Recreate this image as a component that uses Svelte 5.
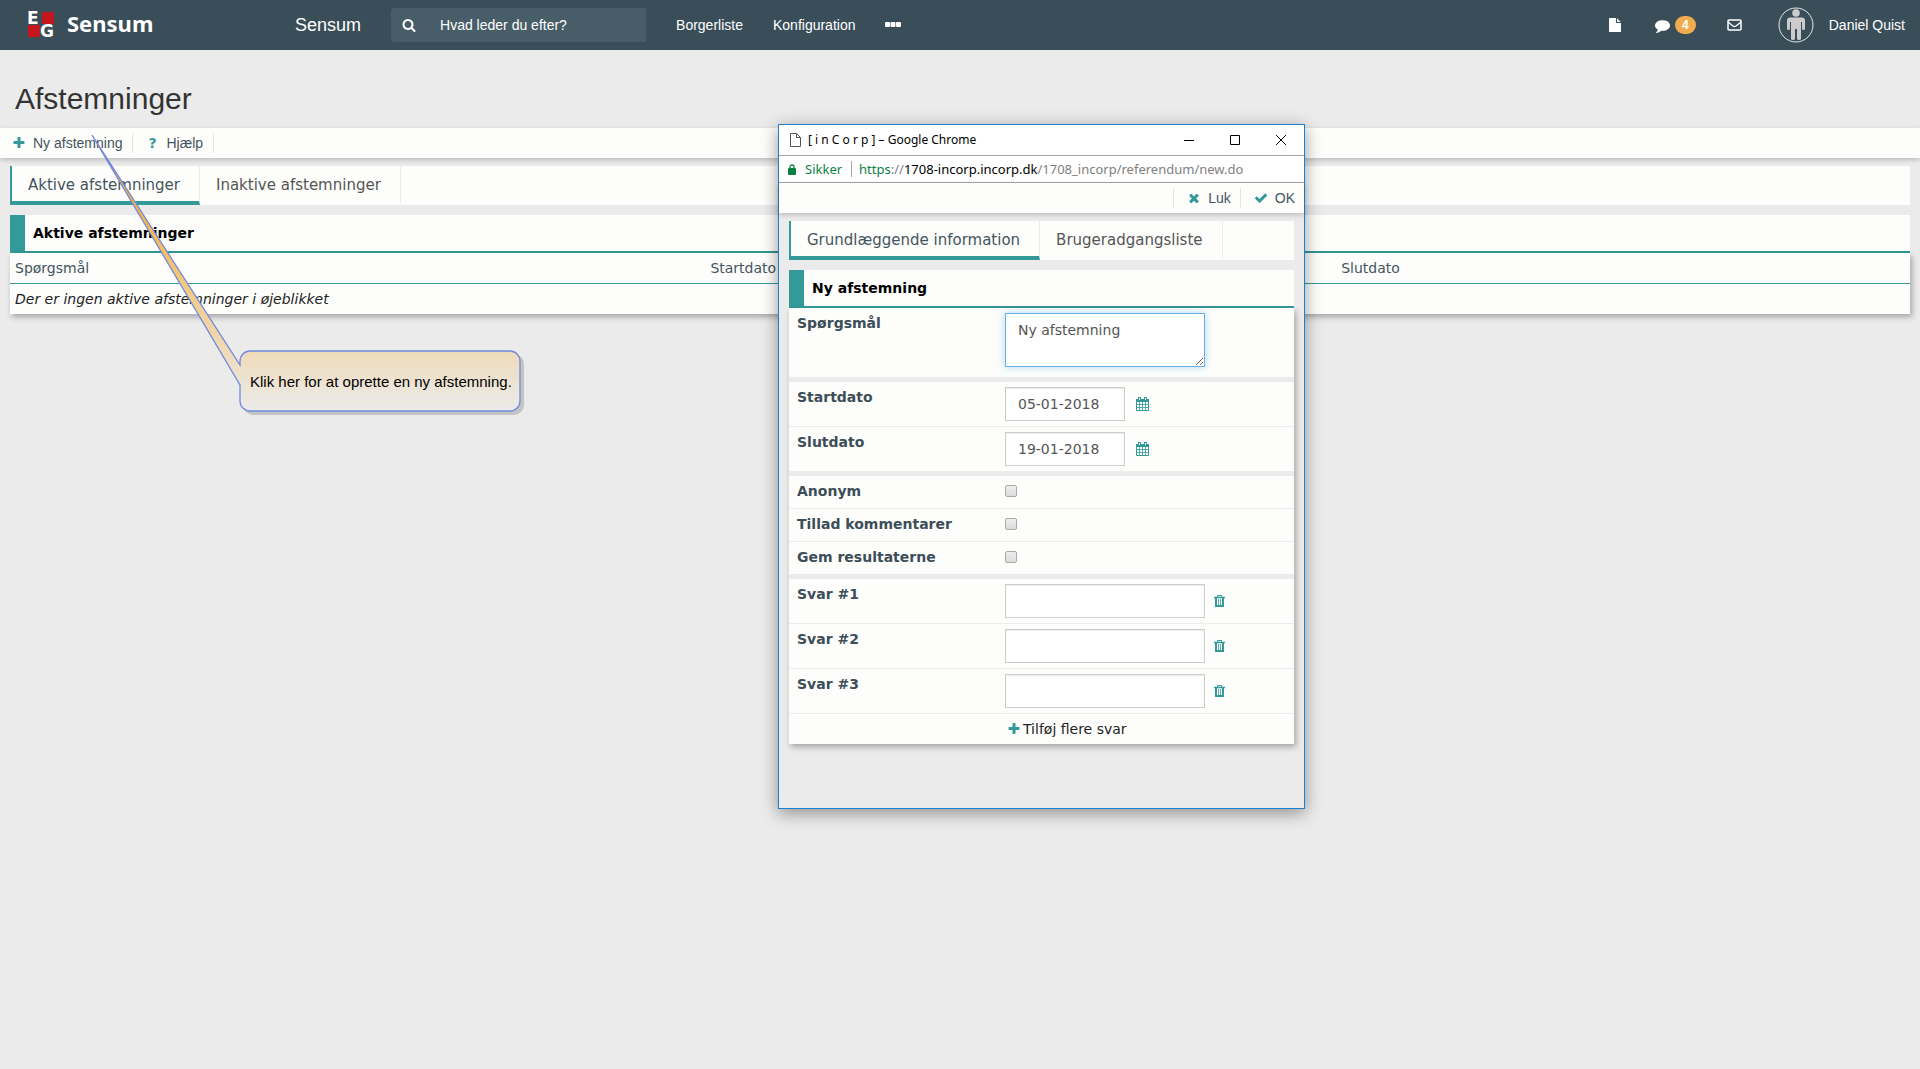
<script>
  let question = $state('Ny afstemning');
  let startDate = $state('05-01-2018');
  let endDate = $state('19-01-2018');
  let answers = $state(['', '', '']);

  const options = [
    { id: 'anonymous', label: 'Anonym' },
    { id: 'comments', label: 'Tillad kommentarer' },
    { id: 'save-results', label: 'Gem resultaterne' }
  ];

  const icons = {
    search: 'M1216 832q0-185-131.5-316.5t-316.5-131.5-316.5 131.5-131.5 316.5 131.5 316.5 316.5 131.5 316.5-131.5 131.5-316.5zm512 832q0 52-38 90t-90 38q-54 0-90-38l-343-342q-179 124-399 124-143 0-273.5-55.5t-225-150-150-225-55.5-273.5 55.5-273.5 150-225 225-150 273.5-55.5 273.5 55.5 225 150 150 225 55.5 273.5q0 220-124 399l343 343q37 37 37 90z',
    plus: 'M1600 736v192q0 40-28 68t-68 28h-416v416q0 40-28 68t-68 28h-192q-40 0-68-28t-28-68v-416h-416q-40 0-68-28t-28-68v-192q0-40 28-68t68-28h416v-416q0-40 28-68t68-28h192q40 0 68 28t28 68v416h416q40 0 68 28t28 68z',
    file: 'M1152 512v-472q22 14 36 28l408 408q14 14 28 36h-472zm-128 32q0 40 28 68t68 28h544v1056q0 40-28 68t-68 28h-1344q-40 0-68-28t-28-68v-1600q0-40 28-68t68-28h800v544z',
    comment: 'M1792 896q0 174-120 321.5t-326 233-450 85.5q-70 0-145-8-198 175-460 242-49 14-114 22-17 2-30.5-9t-17.5-29v-1q-3-4-.5-12t2-10 4.5-9.5l6-9 7-8.5 8-9q7-8 31-34.5t34.5-38 31-39.5 32.5-51 27-59 26-76q-157-89-247.5-220t-90.5-281q0-130 71-248.5t191-204.5 286-136.5 348-50.5q244 0 450 85.5t326 233 120 321.5z',
    times: 'M1490 1322q0 40-28 68l-136 136q-28 28-68 28t-68-28l-294-294-294 294q-28 28-68 28t-68-28l-136-136q-28-28-28-68t28-68l294-294-294-294q-28-28-28-68t28-68l136-136q28-28 68-28t68 28l294 294 294-294q28-28 68-28t68 28l136 136q28 28 28 68t-28 68l-294 294 294 294q28 28 28 68z',
    check: 'M1671 566q0 40-28 68l-724 724-136 136q-28 28-68 28t-68-28l-136-136-362-362q-28-28-28-68t28-68l136-136q28-28 68-28t68 28l294 295 656-657q28-28 68-28t68 28l136 136q28 28 28 68z'
  };

  function addAnswer() {
    answers.push('');
  }

  function removeAnswer(index) {
    answers.splice(index, 1);
  }
</script>

{#snippet icon(name, size = 14)}
  <svg class="icon" width={size} height={size} viewBox="0 0 1792 1792" aria-hidden="true">
    <path fill="currentColor" d={icons[name]} />
  </svg>
{/snippet}

{#snippet calendar()}
  <svg class="icon" width="13" height="14" viewBox="0 0 13 14" fill="none" aria-hidden="true">
    <path fill="currentColor" d="M0 2h2V0h3v2h3V0h3v2h2v3H0z" />
    <path stroke="currentColor" d="M.5 4v9.500h12V4" />
    <path stroke="currentColor" stroke-width=".8" d="M0 7.500h13M0 10.500h13M3.500 5v9M6.500 5v9M9.500 5v9" />
    <path stroke="#fdfefc" d="M3.500 1v2M9.500 1v2" />
  </svg>
{/snippet}

{#snippet trash()}
  <svg class="icon" width="11" height="12" viewBox="0 0 11 12" fill="none" aria-hidden="true">
    <path stroke="currentColor" d="M3.500 2V.5h4V2" />
    <path stroke="currentColor" stroke-width="1.500" d="M0 2.500h11" />
    <path stroke="currentColor" stroke-width="2" d="M2 3v8h7V3" />
    <path stroke="currentColor" stroke-width=".8" d="M4.500 4v6M6.500 4v6" />
  </svg>
{/snippet}

<div class="page">
  <nav class="navbar">
    <a class="brand" href="#home" aria-label="EG Sensum">
      <svg width="28" height="28" viewBox="0 0 28 28" aria-hidden="true">
        <rect x="14" y="1" width="12" height="12" rx="1" fill="#c5161d" />
        <rect x="0" y="14" width="12" height="12" rx="1" fill="#c5161d" />
        <text x="-1" y="13">E</text>
        <text x="12" y="26">G</text>
      </svg>
      <span>Sensum</span>
    </a>
    <a class="product" href="#sensum">Sensum</a>
    <label class="search">
      {@render icon('search')}
      <input type="text" placeholder="Hvad leder du efter?" aria-label="Søg" />
    </label>
    <a class="nav-link" href="#borgerliste">Borgerliste</a>
    <a class="nav-link" href="#konfiguration">Konfiguration</a>
    <button class="more" aria-label="Mere">
      <svg width="16" height="7" viewBox="0 0 16 7" aria-hidden="true">
        <rect x="0" y="0" width="5" height="5" rx="1" fill="currentColor" />
        <rect x="5.500" y="0" width="5" height="5" rx="1" fill="currentColor" />
        <rect x="11" y="0" width="5" height="5" rx="1" fill="currentColor" />
      </svg>
    </button>

    <div class="nav-right">
      <a class="documents" href="#dokumenter" aria-label="Dokumenter">{@render icon('file')}</a>
      <a class="messages" href="#beskeder" aria-label="Beskeder">
        {@render icon('comment', 15)}
        <span class="badge">4</span>
      </a>
      <a class="mail" href="#post" aria-label="Post">
        <svg class="icon" width="15" height="12" viewBox="0 0 15 12" aria-hidden="true">
          <rect x="1" y="1" width="13" height="10" rx="1" fill="none" stroke="currentColor" stroke-width="1.500" />
          <path d="M1 3l5 4q1.500 1 3 0l5-4" fill="none" stroke="currentColor" stroke-width="1.300" />
        </svg>
      </a>
      <a class="user" href="#profil">
        <svg width="36" height="36" viewBox="0 0 36 36" aria-hidden="true">
          <circle cx="18" cy="18" r="17" fill="none" stroke="#e6eaeb" />
          <circle cx="18" cy="6" r="3.800" fill="#ccc" />
          <path fill="#ccc" d="M12 10.500h12q3 0 3 3v8q0 1.500-1.500 1.500T24 21.500V15h-1v16.500q0 1.500-2 1.500t-2-1.500V22h-2v9.500q0 1.500-2 1.500t-2-1.500V15h-1v6.500q0 1.500-1.500 1.500T9 21.500v-8q0-3 3-3z" />
        </svg>
        <span>Daniel Quist</span>
      </a>
    </div>
  </nav>

  <h1>Afstemninger</h1>

  <div class="toolbar">
    <button class="tool">{@render icon('plus')}<span>Ny afstemning</span></button>
    <button class="tool"><b class="help">?</b><span>Hjælp</span></button>
  </div>

  <main>
    <div class="tabs">
      <button class="tab active">Aktive afstemninger</button>
      <button class="tab">Inaktive afstemninger</button>
    </div>
    <h2>Aktive afstemninger</h2>
    <table>
      <thead>
        <tr>
          <th class="col-question">Spørgsmål</th>
          <th class="col-start">Startdato</th>
          <th>Slutdato</th>
        </tr>
      </thead>
      <tbody>
        <tr>
          <td colspan="3">Der er ingen aktive afstemninger i øjeblikket</td>
        </tr>
      </tbody>
    </table>
  </main>

  <!-- Help balloon pointing at the "Ny afstemning" button -->
  <div class="callout">
    <svg width="440" height="286" viewBox="0 0 440 286" aria-hidden="true">
      <defs>
        <linearGradient id="balloon" gradientUnits="userSpaceOnUse" x1="0" y1="0" x2="0" y2="276">
          <stop offset="0" stop-color="#ffa000" />
          <stop offset="1" stop-color="#ebebeb" />
        </linearGradient>
      </defs>
      <rect x="151" y="219" width="281" height="61" rx="10" fill="#c4c4c4" />
      <path
        d="M0 0L148 230V226a10 10 0 0 1 10-10H418a10 10 0 0 1 10 10V266a10 10 0 0 1-10 10H158a10 10 0 0 1-10-10V250Z"
        fill="url(#balloon)" stroke="#6f8ade" stroke-width="1.300" />
    </svg>
    <p>Klik her for at oprette en ny afstemning.</p>
  </div>

  <div class="window">
    <div class="titlebar">
      <svg width="11" height="14" viewBox="0 0 11 14" fill="none" stroke="#555" aria-hidden="true">
        <path d="M.5.5h6l4 4v9H.5zM6.500.5v4h4" />
      </svg>
      <span class="title">[ i n C o r p ] – Google Chrome</span>
      <button aria-label="Minimer">
        <svg width="10" height="10" viewBox="0 0 10 10" stroke="#000"><path d="M0 5.500h10" /></svg>
      </button>
      <button aria-label="Maksimer">
        <svg width="10" height="10" viewBox="0 0 10 10" stroke="#000" fill="none"><path d="M.5.5h9v9h-9z" /></svg>
      </button>
      <button aria-label="Luk vindue">
        <svg width="10" height="10" viewBox="0 0 10 10" stroke="#000"><path d="M0 0l10 10M10 0L0 10" /></svg>
      </button>
    </div>
    <div class="address">
      <svg width="8" height="11" viewBox="0 0 8 11" aria-hidden="true">
        <rect y="4" width="8" height="7" rx="1" fill="#0b8043" />
        <path d="M2 5V3a2 2 0 0 1 4 0v2" fill="none" stroke="#0b8043" stroke-width="1.300" />
      </svg>
      <span class="secure">Sikker</span>
      <span class="url"><span class="scheme">https</span>://<span class="host">1708-incorp.incorp.dk</span>/1708_incorp/referendum/new.do</span>
    </div>
    <div class="toolbar actions">
      <button class="tool">{@render icon('times')}<span>Luk</span></button>
      <button class="tool">{@render icon('check')}<span>OK</span></button>
    </div>

    <div class="window-body">
      <div class="tabs">
        <button class="tab active">Grundlæggende information</button>
        <button class="tab">Brugeradgangsliste</button>
      </div>
      <h2>Ny afstemning</h2>
      <form>
        <fieldset>
          <div class="row question">
            <label for="question">Spørgsmål</label>
            <textarea id="question" bind:value={question}></textarea>
          </div>
        </fieldset>
        <fieldset>
          <div class="row">
            <label for="start">Startdato</label>
            <input id="start" class="field date" type="text" bind:value={startDate} />
            <button type="button" class="pick" aria-label="Vælg startdato">{@render calendar()}</button>
          </div>
          <div class="row">
            <label for="end">Slutdato</label>
            <input id="end" class="field date" type="text" bind:value={endDate} />
            <button type="button" class="pick" aria-label="Vælg slutdato">{@render calendar()}</button>
          </div>
        </fieldset>
        <fieldset>
          {#each options as option}
            <div class="row option">
              <label for={option.id}>{option.label}</label>
              <input id={option.id} type="checkbox" />
            </div>
          {/each}
        </fieldset>
        <fieldset>
          {#each answers as _, i}
            <div class="row">
              <label for="answer-{i}">Svar #{i + 1}</label>
              <input id="answer-{i}" class="field" type="text" bind:value={answers[i]} />
              <button type="button" class="remove" aria-label="Slet svar {i + 1}" onclick={() => removeAnswer(i)}>
                {@render trash()}
              </button>
            </div>
          {/each}
          <div class="row add">
            <button type="button" onclick={addAnswer}>{@render icon('plus')}<span>Tilføj flere svar</span></button>
          </div>
        </fieldset>
      </form>
    </div>
  </div>
</div>

<style>
  :global(body) {
    background: #ebebeb;
  }

  .page {
    position: relative;
    min-height: 100vh;
    font: 14px/20px "DejaVu Sans", sans-serif;
    color: #222;
  }

  button {
    padding: 0;
    border: 0;
    background: none;
    font: inherit;
    color: inherit;
    cursor: pointer;
  }

  a {
    color: inherit;
    text-decoration: none;
  }

  .icon {
    display: block;
    flex: none;
  }

  /* Top navigation */
  .navbar {
    display: flex;
    align-items: center;
    height: 50px;
    padding: 0 15px 0 28px;
    background: #394e58;
    color: #fff;
    font-family: "Liberation Sans", Arial, sans-serif;
  }

  .brand {
    display: flex;
    align-items: center;
    gap: 11px;
    width: 267px;
    font: bold 22px/26px "Noto Sans", sans-serif;
  }

  .brand svg {
    overflow: visible;
  }

  .brand span {
    padding-bottom: 4px;
  }

  .brand text {
    font: bold 17px "DejaVu Sans", sans-serif;
    fill: #fff;
  }

  .product {
    margin-right: 30px;
    font-size: 18px;
  }

  .search {
    display: flex;
    align-items: center;
    gap: 22px;
    box-sizing: border-box;
    width: 255px;
    height: 34px;
    margin-right: 30px;
    padding-left: 11px;
    border-radius: 4px 0 0 4px;
    background: #475d67;
  }

  .search input {
    flex: 1;
    min-width: 0;
    border: 0;
    outline: 0;
    background: none;
    font: inherit;
    color: #fff;
  }

  .search input::placeholder {
    color: #fff;
    opacity: 1;
  }

  .nav-link {
    margin-right: 30px;
  }

  .more svg {
    display: block;
  }

  .nav-right {
    display: flex;
    align-items: center;
    margin-left: auto;
  }

  .documents {
    margin-right: 33px;
  }

  .messages {
    display: flex;
    align-items: center;
    gap: 5px;
    margin-right: 31px;
  }

  .badge {
    width: 21px;
    border-radius: 10px;
    background: #f0ad4e;
    font-size: 12px;
    font-weight: bold;
    line-height: 18px;
    text-align: center;
  }

  .mail {
    margin-right: 36px;
  }

  .user {
    display: flex;
    align-items: center;
    gap: 15px;
  }

  h1 {
    margin: 0;
    padding: 31px 15px 11px;
    font: 30px/36px "Liberation Sans", Arial, sans-serif;
    color: #333;
  }

  /* Toolbars */
  .toolbar {
    display: flex;
    align-items: center;
    height: 30px;
    background: #fdfefc;
    box-shadow: 0 2px 5px rgba(0, 0, 0, 0.2);
    font-family: "Liberation Sans", Arial, sans-serif;
    color: #44545d;
  }

  .tool {
    display: flex;
    align-items: center;
    gap: 7px;
    height: 20px;
    padding: 0 10px 0 12px;
    border-right: 1px solid #e6e6e6;
  }

  .tool .icon,
  .help {
    color: #339999;
  }

  .help {
    width: 14px;
    font: bold 14px/20px "DejaVu Sans", sans-serif;
    text-align: center;
  }

  .actions {
    justify-content: flex-end;
  }

  .actions .tool {
    padding: 0 9px 0 13px;
    border-right: 0;
    border-left: 1px solid #e6e6e6;
  }

  /* Tabs and section heading */
  main {
    padding: 8px 10px;
  }

  .tabs {
    display: flex;
    height: 39px;
    margin-bottom: 10px;
    background: #fdfefc;
  }

  .tab {
    padding: 2px 19px 0 16px;
    border-right: 1px solid #ebebeb;
    border-bottom: 4px solid transparent;
    font-size: 15px;
    color: #555;
  }

  .tab.active {
    border-left: 2px solid #339999;
    border-bottom-color: #339999;
    color: #44545d;
  }

  h2 {
    margin: 0;
    padding-left: 8px;
    border-left: 15px solid #339999;
    border-bottom: 2px solid #339999;
    background: #fdfefc;
    font-size: 14px;
    line-height: 36px;
    color: #000;
  }

  table {
    width: 100%;
    border-collapse: collapse;
    background: #fdfefc;
    box-shadow: 2px 3px 6px rgba(0, 0, 0, 0.3);
  }

  th,
  td {
    height: 30px;
    padding: 0 5px;
    text-align: left;
    font-weight: normal;
  }

  th {
    border-bottom: 1px solid #339999;
    color: #44545d;
  }

  td {
    font-style: italic;
  }

  .col-question {
    width: 36.6%;
  }

  .col-start {
    width: 33.2%;
  }

  /* Help balloon */
  .callout {
    position: absolute;
    top: 135px;
    left: 92px;
  }

  .callout svg {
    display: block;
    overflow: visible;
  }

  .callout p {
    position: absolute;
    top: 237px;
    left: 158px;
    margin: 0;
    font-family: "Liberation Sans", Arial, sans-serif;
    font-size: 15px;
    color: #000;
    white-space: nowrap;
  }

  /* Popup browser window */
  .window {
    position: absolute;
    top: 124px;
    left: 778px;
    width: 525px;
    border: 1px solid #1c80d0;
    background: #ebebeb;
    box-shadow: 0 4px 16px rgba(0, 0, 0, 0.4);
  }

  .titlebar,
  .address {
    display: flex;
    align-items: center;
    background: #fff;
    border-bottom: 1px solid #a5a5a5;
    font-family: "Noto Sans", sans-serif;
  }

  .titlebar {
    height: 30px;
    padding-left: 11px;
    font-size: 12px;
    color: #000;
  }

  .title {
    flex: 1;
    margin-left: 7px;
  }

  .titlebar button {
    display: grid;
    place-items: center;
    width: 46px;
    height: 30px;
  }

  .address {
    height: 26px;
    padding-left: 9px;
    font-size: 13px;
  }

  .secure {
    margin: 0 7px 0 9px;
    padding-right: 9px;
    border-right: 1px solid #a5a5a5;
    line-height: 16px;
  }

  .secure,
  .scheme {
    color: #0b8043;
  }

  .url {
    color: #808080;
    white-space: nowrap;
  }

  .host {
    color: #000;
  }

  .window-body {
    padding: 8px 10px 64px;
  }

  form {
    box-shadow: 2px 3px 6px rgba(0, 0, 0, 0.3);
  }

  fieldset {
    min-width: 0;
    margin: 0;
    padding: 0;
    border: 0;
    border-bottom: 5px solid #ebebeb;
    background: #fdfefc;
  }

  fieldset:last-child {
    border-bottom: 0;
  }

  .row {
    display: flex;
    align-items: center;
    padding: 5px 8px;
    border-bottom: 1px solid #ebebeb;
  }

  .row:last-child {
    border-bottom: 0;
  }

  .row label {
    align-self: flex-start;
    width: 208px;
    font-weight: bold;
    color: #3c4d58;
  }

  .question {
    padding-bottom: 10px;
  }

  textarea,
  .field {
    box-sizing: border-box;
    width: 200px;
    height: 34px;
    margin: 0;
    padding: 6px 12px;
    border: 1px solid #ccc;
    background: #fff;
    box-shadow: inset 0 1px 1px rgba(0, 0, 0, 0.08);
    font: inherit;
    color: #555;
  }

  textarea {
    height: 54px;
    border-color: #66afe9;
    box-shadow: 0 0 8px rgba(102, 175, 233, 0.5);
    resize: vertical;
  }

  .date {
    width: 120px;
  }

  .option {
    padding-bottom: 7px;
  }

  .option input {
    appearance: none;
    box-sizing: border-box;
    width: 12px;
    height: 12px;
    margin: 0;
    border: 1px solid #a9a9a9;
    border-radius: 2px;
    background: linear-gradient(#eee, #dcdcdc);
  }

  .pick,
  .remove,
  .add .icon {
    color: #339999;
  }

  .pick {
    margin-left: 11px;
  }

  .remove {
    margin-left: 9px;
  }

  .add button {
    display: flex;
    align-items: center;
    gap: 2px;
    margin-left: 210px;
  }
</style>
